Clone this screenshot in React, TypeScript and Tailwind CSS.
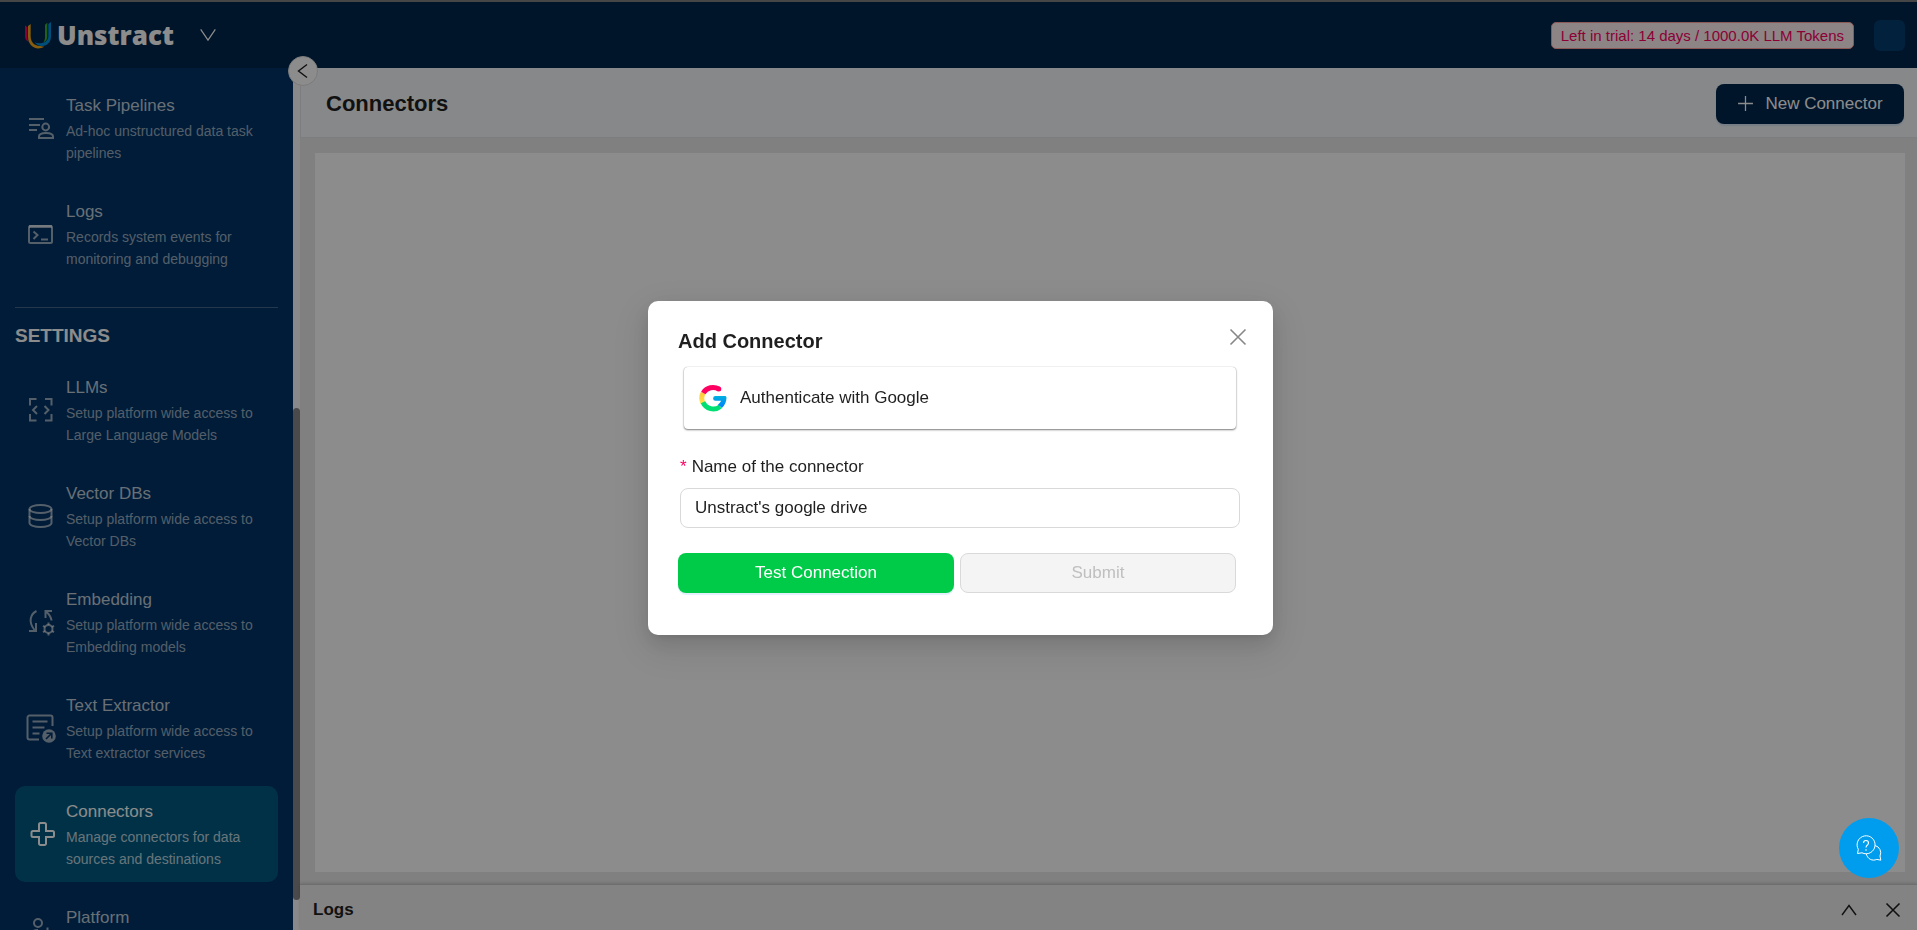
import React from 'react';

const stroke = {
  fill: 'none',
  stroke: 'currentColor',
  strokeWidth: 2,
};

const PipelinesIcon = () => (
  <svg width="28" height="28" viewBox="0 0 28 28" {...stroke}>
    <path d="M2 5h15M2 11h11M2 16h8" />
    <circle cx="18.700" cy="13" r="3.400" />
    <path d="M12 24v-1.500c0-2.500 3-3.500 7-3.500s7 1 7 3.500V24z" />
  </svg>
);

const TerminalIcon = () => (
  <svg width="28" height="28" viewBox="0 0 28 28" {...stroke}>
    <rect x="2" y="6" width="23" height="17" rx="1.500" />
    <path d="M2 6.500h23" strokeWidth="3" />
    <path d="M6.500 11.500l4 3.500-4 4M14 19.500h7" />
  </svg>
);

const ModelIcon = () => (
  <svg width="28" height="28" viewBox="0 0 28 28" {...stroke}>
    <path d="M3 9.500V3h6.500M18 3h6.500v6.500M24.500 18v6.500H18M9.500 24.500H3V18" />
    <path d="M10 10l-4 4 4 4M17.500 10l4 4-4 4" />
  </svg>
);

const DatabaseIcon = () => (
  <svg width="28" height="28" viewBox="0 0 28 28" {...stroke}>
    <ellipse cx="13.500" cy="7" rx="11" ry="4" />
    <path d="M2.500 7v14c0 2.200 4.900 4 11 4s11-1.800 11-4V7" />
    <path d="M2.500 14c0 2.200 4.900 4 11 4s11-1.800 11-4" />
  </svg>
);

const EmbeddingIcon = () => (
  <svg width="28" height="28" viewBox="0 0 28 28" {...stroke}>
    <path d="M9.500 3C4 6 .5 13 7.500 22M2 23h7v-8M18.500 10V3H25M19 3.500c3 2.500 5 5 5.500 9" />
    <circle cx="21.500" cy="21" r="4" />
    <path d="M21.500 14.500v2.500M21.500 25v2.500M16 17.800l2 1.200M25 23l2 1.200M16 24.200l2-1.200M25 19l2-1.200" />
  </svg>
);

const ExtractorIcon = () => (
  <svg width="30" height="30" viewBox="0 0 30 30" className="shrink-0" {...stroke}>
    <path d="M13 26.500H3.500a2 2 0 0 1-2-2V4.500a2 2 0 0 1 2-2h21a2 2 0 0 1 2 2V13" />
    <path d="M6.500 8.500h15M6.500 14.500h12M6.500 20.500h7" />
    <circle cx="23" cy="23" r="6.800" fill="currentColor" stroke="none" />
    <path d="M20 26l5.500-5.500M20.500 20.200h5.300v5.300" stroke="#003366" strokeWidth="1.600" />
  </svg>
);

const ConnectorIcon = () => (
  <svg width="28" height="28" viewBox="-1 0 28 28" {...stroke}>
    <path d="M12.500 3h4a1.500 1.500 0 0 1 1.500 1.500V11h6.500a1.500 1.500 0 0 1 1.500 1.500v3a1.500 1.500 0 0 1-1.500 1.500H18v6.500a1.500 1.500 0 0 1-1.500 1.500h-4a1.500 1.500 0 0 1-1.500-1.500V17H5a1.500 1.500 0 0 1-1.500-1.500v-3A1.500 1.500 0 0 1 5 11h6V4.500A1.500 1.500 0 0 1 12.500 3z" />
  </svg>
);

const PlatformIcon = () => (
  <svg width="28" height="28" viewBox="0 0 28 28" {...stroke}>
    <circle cx="11" cy="8" r="4" />
    <path d="M3 23c0-5 3-8 8-8" />
    <circle cx="20.500" cy="19.500" r="3.500" />
    <path d="M20.500 12.500v3M20.500 23.500v3M14.500 16l3 1.700M23.500 21.300l3 1.700M14.500 23l3-1.700M23.500 17.700l3-1.700" />
  </svg>
);

const LogoMark = () => (
  <svg width="26" height="27" viewBox="0 0 78 81">
    <path d="M0 10l7 6v28c0 6 2 12 5 16C4 56 0 50 0 44z" fill="#ff0062" />
    <path d="M17 6v36c0 17 9 29 28 30l13 2C34 88 9 72 9 45V12z" fill="#f5a81c" />
    <path d="M67 2v42c0 8-4 14-12 17 3-4 5-9 5-15V8z" fill="#3fae2a" />
    <path d="M78 0v42c0 18-10 29-27 30-9 0-17-4-22-11 4 2 8 3 13 3 17 0 28-8 28-22V6z" fill="#0091e0" />
  </svg>
);

const GoogleIcon = () => (
  <svg width="28" height="28" viewBox="0 0 28 28" fill="none" strokeWidth="5">
    <defs>
      <linearGradient id="g-blue" x1="0" y1="0" x2="0" y2="1">
        <stop offset="0" stopColor="#00b0e0" />
        <stop offset="1" stopColor="#007dfa" />
      </linearGradient>
      <linearGradient id="g-yellow" x1="0" y1="0" x2="0" y2="1">
        <stop offset="0" stopColor="#ffc840" />
        <stop offset="1" stopColor="#ffe14a" />
      </linearGradient>
    </defs>
    <path d="M4.200 8.800a11.300 11.300 0 0 0-.2 10.400" stroke="url(#g-yellow)" />
    <path d="M4 18.300a11.200 11.200 0 0 0 17.200 4.300" stroke="#00df74" />
    <path d="M20 5.200A11.200 11.200 0 0 0 4.300 9" stroke="#ff0062" />
    <circle cx="19.800" cy="5.100" r="2.500" fill="#ff0062" stroke="none" />
    <path
      d="M16.500 12h9.300c1 0 1.700.6 1.700 1.600 0 4.200-1.600 7.800-4.600 10.400l-4-3.400c1.500-1 2.600-2.300 3.200-3.800h-5.600a2.400 2.400 0 0 1 0-4.800z"
      fill="url(#g-blue)"
      stroke="none"
    />
  </svg>
);

const ChatIcon = () => (
  <svg width="26" height="26" viewBox="0 0 26 26" fill="none" stroke="currentColor" strokeWidth="1">
    <path d="M1.500 18.500l.8-4.200A9 9 0 1 1 6 17.800z" />
    <path d="M19 10.500a7.500 7.500 0 0 1 5 10.500l.8 4.200-4-.8c-4.500 2-9.300-.4-10.500-5.500" />
    <path d="M7.500 8c0-3.300 5-3.300 5 0 0 2-2.500 2-2.500 4.500M10 14.300v1.400" strokeWidth="1.100" />
  </svg>
);

const LineIcon = ({ d, size, width = 2 }: { d: string; size: number; width?: number }) => (
  <svg width={size} height={size} viewBox="0 0 16 16" fill="none" stroke="currentColor" strokeWidth={width}>
    <path d={d} />
  </svg>
);

type Item = { title: string; text?: string; icon: React.ReactNode; active?: boolean };

const mainItems: Item[] = [
  { title: 'Task Pipelines', text: 'Ad-hoc unstructured data task pipelines', icon: <PipelinesIcon /> },
  { title: 'Logs', text: 'Records system events for monitoring and debugging', icon: <TerminalIcon /> },
];

const settingItems: Item[] = [
  { title: 'LLMs', text: 'Setup platform wide access to Large Language Models', icon: <ModelIcon /> },
  { title: 'Vector DBs', text: 'Setup platform wide access to Vector DBs', icon: <DatabaseIcon /> },
  { title: 'Embedding', text: 'Setup platform wide access to Embedding models', icon: <EmbeddingIcon /> },
  { title: 'Text Extractor', text: 'Setup platform wide access to Text extractor services', icon: <ExtractorIcon /> },
  { title: 'Connectors', text: 'Manage connectors for data sources and destinations', icon: <ConnectorIcon />, active: true },
  { title: 'Platform', icon: <PlatformIcon /> },
];

function NavItem({ item }: { item: Item }) {
  return (
    <a
      href="#"
      className={
        item.active
          ? 'flex min-h-[74px] shrink-0 items-center gap-[11px] rounded-[10px] bg-[#005a82] px-3 text-white'
          : 'flex min-h-[74px] shrink-0 items-center gap-[11px] rounded-[10px] px-3 text-white/60'
      }
    >
      <span className="flex w-7 shrink-0 justify-center">{item.icon}</span>
      <span className="min-w-0 flex-1 self-start py-3">
        <span className={item.active ? 'block text-[17px] leading-7' : 'block text-[17px] leading-7 text-white/75'}>
          {item.title}
        </span>
        {item.text && (
          <span className={item.active ? 'block text-sm leading-[22px] text-white/75' : 'block text-sm leading-[22px]'}>
            {item.text}
          </span>
        )}
      </span>
    </a>
  );
}

export default function App() {
  return (
    <div className="flex h-screen flex-col overflow-hidden border-t-2 border-[#808080] bg-[#e9e9e9] font-['Liberation_Sans',Arial,sans-serif] text-[17px] text-[#1f1f1f]">
      {/* Top bar */}
      <header className="flex h-[66px] shrink-0 items-center bg-[#00264d] pr-3 pl-[25px] text-white">
        <LogoMark />
        <span className="ml-[6px] font-['Open_Sans',sans-serif] text-[26px] leading-8 font-extrabold">Unstract</span>
        <button type="button" aria-label="Switch workspace" className="ml-[25px]">
          <LineIcon size={18} width={1.100} d="M1.500 3L8 12.500 14.500 3" />
        </button>
        <span className="ml-auto rounded-[5px] border border-[#ffa39e] bg-[#fff1f2] px-[9px] text-[15px] leading-[25px] text-[#ff0062]">
          Left in trial: 14 days / 1000.0K LLM Tokens
        </span>
        <button type="button" aria-label="Account" className="ml-5 size-[31px] rounded-md bg-[#033c70]" />
      </header>

      <div className="relative flex min-h-0 flex-1">
        {/* Sidebar */}
        <aside className="flex w-[293px] shrink-0 flex-col overflow-hidden bg-[#003366] px-[15px] pt-3">
          <nav className="flex flex-col gap-[10px]">
            {mainItems.map((item) => (
              <NavItem key={item.title} item={item} />
            ))}
          </nav>
          <hr className="mt-[25px] border-white/25" />
          <h2 className="mt-[13px] mb-[11px] text-[19px] leading-[30px] font-bold text-white">SETTINGS</h2>
          <nav className="flex flex-col gap-[10px]">
            {settingItems.map((item) => (
              <NavItem key={item.title} item={item} />
            ))}
          </nav>
        </aside>

        {/* Scroll track */}
        <div className="grid w-[7px] shrink-0 grid-rows-[340fr_492fr_30fr] bg-[#fafafa]">
          <div className="row-start-2 rounded-full bg-[#888888]" />
        </div>

        <button
          type="button"
          aria-label="Collapse menu"
          className="absolute -top-3 left-[288px] flex size-[30px] items-center justify-center rounded-full border border-[#e0e0e0] bg-white"
        >
          <LineIcon size={16} width={1.4} d="M12 1.500L3.500 8l8.500 6.500" />
        </button>

        {/* Page */}
        <main className="flex min-w-0 flex-1 flex-col">
          <div className="flex h-[70px] shrink-0 items-center justify-between border-b border-l border-[#e0e4e8] bg-[#f5f7f9] pt-[2px] pr-[13px] pl-[25px]">
            <h1 className="text-[22px] font-bold">Connectors</h1>
            <button
              type="button"
              className="flex h-10 w-[188px] items-center justify-center gap-[11px] rounded-lg bg-[#00264d] text-white shadow-[0_2px_1px_#dbe6f5]"
            >
              <LineIcon size={17} width={1.2} d="M8 1v14M1 8h14" />
              New Connector
            </button>
          </div>
          <div className="flex min-h-0 flex-1 pt-[15px] pr-3 pb-3 pl-[15px]">
            <div className="flex-1 bg-white" />
          </div>
          <footer className="flex h-[46px] shrink-0 items-center border-t border-[#c8c8c8] bg-[#eeeeee] pt-1 pr-4 pl-[13px] shadow-[0_-1px_3px_rgba(0,0,0,0.15)]">
            <h2 className="font-bold">Logs</h2>
            <button type="button" aria-label="Expand logs" className="ml-auto">
              <LineIcon size={16} width={1.4} d="M1 13L8 3.500l7 9.500" />
            </button>
            <button type="button" aria-label="Close logs" className="ml-7">
              <LineIcon size={16} width={1.600} d="M1.500 1.500l13 13M14.500 1.500l-13 13" />
            </button>
          </footer>
        </main>
      </div>

      {/* Dialog */}
      <div className="fixed inset-0 flex items-center justify-center bg-black/45 pt-[6px] pl-1">
        <div
          role="dialog"
          aria-labelledby="dialog-title"
          className="w-[625px] rounded-[10px] bg-white px-[30px] pt-[25px] pb-[42px] shadow-[0_8px_20px_rgba(0,0,0,0.10),0_4px_8px_-5px_rgba(0,0,0,0.15),0_12px_36px_10px_rgba(0,0,0,0.08)]"
        >
          <div className="flex h-[30px] items-center justify-between">
            <h2 id="dialog-title" className="text-xl font-bold">
              Add Connector
            </h2>
            <button type="button" aria-label="Close" className="mr-[-5px] mb-2 text-[#888888]">
              <LineIcon size={20} width={1.3} d="M2 2l12 12M14 2L2 14" />
            </button>
          </div>
          <button
            type="button"
            className="mt-[11px] ml-[6px] flex h-[62px] w-[552px] items-center gap-[13px] rounded bg-white pl-[15px] shadow-[0_1px_2px_rgba(0,0,0,0.5),0_0_1px_rgba(0,0,0,0.3)]"
          >
            <GoogleIcon />
            Authenticate with Google
          </button>
          <form className="mt-[25px]">
            <label htmlFor="connector-name" className="ml-[2px] flex gap-[5px] leading-[26px]">
              <span className="text-[#ff0062]">*</span>
              Name of the connector
            </label>
            <input
              id="connector-name"
              type="text"
              defaultValue="Unstract's google drive"
              className="mt-2 ml-[2px] h-10 w-[560px] rounded-lg border border-[#d9d9d9] px-[14px] outline-none"
            />
            <div className="mt-[25px] grid w-[558px] grid-cols-2 gap-[6px]">
              <button
                type="button"
                className="h-10 rounded-lg bg-[#00cb48] text-white shadow-[0_2px_1px_#e2effc]"
              >
                Test Connection
              </button>
              <button
                type="submit"
                disabled
                className="h-10 rounded-lg border border-[#d9d9d9] bg-[#f4f4f4] text-[#bfbfbf]"
              >
                Submit
              </button>
            </div>
          </form>
        </div>
      </div>

      <button
        type="button"
        aria-label="Help chat"
        className="fixed right-[18px] bottom-[52px] flex size-[60px] items-center justify-center rounded-full bg-[#009dee] text-white"
      >
        <ChatIcon />
      </button>
    </div>
  );
}
